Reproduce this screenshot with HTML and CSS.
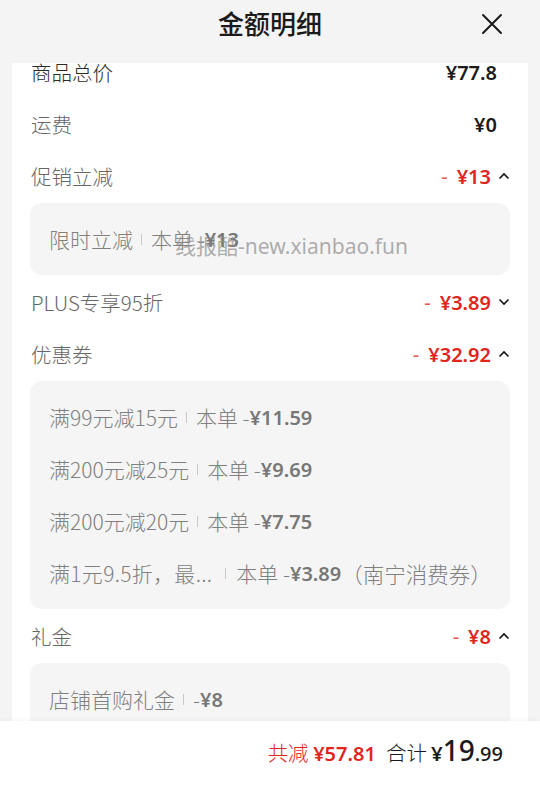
FILE: index.html
```html
<!DOCTYPE html>
<html lang="zh-CN">
<head>
<meta charset="utf-8">
<title>金额明细</title>
<link rel="stylesheet" href="styles.css">
</head>
<body>
<div class="sheet">
  <header class="head">
    <h1 class="title">金额明细</h1>
    <button class="close" aria-label="关闭">
      <svg width="22" height="22" viewBox="0 0 22 22"><path d="M2 2 L20 20 M20 2 L2 20" stroke="#1a1a1a" stroke-width="2" fill="none" stroke-linecap="round"/></svg>
    </button>
  </header>
  <main class="scroll">
    <div class="card">
      <div class="row"><span class="label dark">商品总价</span><span class="val plain">¥77.8</span></div>
      <div class="row"><span class="label">运费</span><span class="val plain">¥0</span></div>
      <div class="row"><span class="label">促销立减</span><span class="val red"><span class="dash">-</span>¥13<svg class="chev" viewBox="0 0 12 8"><path d="M1.5 6.5 L6 2 L10.5 6.5" fill="none" stroke="#111" stroke-width="1.6"/></svg></span></div>
      <div class="box">
        <div class="line">限时立减<i class="sep"></i>本单 -<b>¥13</b></div>
      </div>
      <div class="row"><span class="label">PLUS专享95折</span><span class="val red"><span class="dash">-</span>¥3.89<svg class="chev" viewBox="0 0 12 8"><path d="M1.5 1.5 L6 6 L10.5 1.5" fill="none" stroke="#111" stroke-width="1.6"/></svg></span></div>
      <div class="row"><span class="label">优惠券</span><span class="val red"><span class="dash">-</span>¥32.92<svg class="chev" viewBox="0 0 12 8"><path d="M1.5 6.5 L6 2 L10.5 6.5" fill="none" stroke="#111" stroke-width="1.6"/></svg></span></div>
      <div class="box">
        <div class="line">满99元减15元<i class="sep"></i>本单 -<b>¥11.59</b></div>
        <div class="line">满200元减25元<i class="sep"></i>本单 -<b>¥9.69</b></div>
        <div class="line">满200元减20元<i class="sep"></i>本单 -<b>¥7.75</b></div>
        <div class="line"><span class="trunc">满1元9.5折，最...</span><i class="sep wide"></i>本单 -<b>¥3.89</b><span class="note">（南宁消费券）</span></div>
      </div>
      <div class="row"><span class="label">礼金</span><span class="val red"><span class="dash">-</span>¥8<svg class="chev" viewBox="0 0 12 8"><path d="M1.5 6.5 L6 2 L10.5 6.5" fill="none" stroke="#111" stroke-width="1.6"/></svg></span></div>
      <div class="box">
        <div class="line">店铺首购礼金<i class="sep"></i>-<b>¥8</b></div>
      </div>
    </div>
    <div class="watermark">线报酷-new.xianbao.fun</div>
  </main>
  <footer class="foot">
    <span class="saved">共减 <b>¥57.81</b></span>
    <span class="total">合计 <b class="yen">¥</b><span class="big">19</span><span class="small">.99</span></span>
  </footer>
</div>
</body>
</html>
```

FILE: styles.css
```css
* { box-sizing: border-box; }
html, body { margin: 0; padding: 0; }
body {
  background: #f4f4f4;
  font-family: "Noto Sans CJK SC", "Noto Sans", sans-serif;
  width: 540px;
  height: 786px;
  overflow: hidden;
}
.sheet {
  display: flex;
  flex-direction: column;
  height: 786px;
}
.head {
  position: relative;
  height: 63px;
  flex: none;
  display: flex;
  align-items: center;
  justify-content: center;
  background: #f4f4f4;
}
.title {
  margin: 0;
  font-size: 26px;
  font-weight: 500;
  color: #1a1a1a;
  line-height: 1;
  padding-bottom: 14px;
  position: relative;
  top: -2px;
}
.close {
  position: absolute;
  right: 37px;
  top: 13px;
  width: 22px;
  height: 22px;
  padding: 0;
  border: 0;
  background: none;
  display: flex;
}
.scroll {
  position: relative;
  flex: 1;
  overflow: hidden;
  padding: 0 12px;
}
.card {
  background: #fff;
  margin-top: -17px;
  padding: 0 18px 40px;
  min-height: 800px;
}
.row {
  height: 52px;
  display: flex;
  align-items: center;
  justify-content: space-between;
  padding-left: 1px;
}
.label {
  font-size: 20.5px;
  font-weight: 300;
  color: #666;
}
.label.dark { color: #2a2a2a; }
.val {
  font-size: 20px;
  font-weight: 600;
  display: flex;
  align-items: center;
  font-family: "Noto Sans", "Noto Sans CJK SC", sans-serif;
}
.val.plain {
  color: #1a1a1a;
  margin-right: 13px;
}
.val.red { color: #e1251b; }
.dash {
  font-weight: 400;
  margin-right: 9px;
  color: #e6574e;
}
.chev {
  width: 12px;
  height: 8px;
  margin-left: 7px;
}
.box {
  background: #f5f5f5;
  border-radius: 12px;
  padding: 10px 0;
  margin: 1px 0;
}
.line {
  height: 52px;
  display: flex;
  align-items: center;
  padding-left: 19px;
  font-size: 21px;
  font-weight: 300;
  color: #808080;
  white-space: nowrap;
}
.line b {
  font-weight: 600;
  color: #777;
  font-size: 20px;
  font-family: "Noto Sans", "Noto Sans CJK SC", sans-serif;
}
.trunc { letter-spacing: 0.3px; }
.note { font-size: 21.5px; }
.sep {
  display: inline-block;
  width: 1px;
  height: 11px;
  background: #c8c8c8;
  margin: 0 9px 0 8px;
}
.sep.wide { margin: 0 10px 0 13px; }
.watermark {
  position: absolute;
  left: 175px;
  top: 167px;
  font-size: 21px;
  color: rgba(140, 140, 140, 0.7);
  font-family: "Noto Sans", "Noto Sans CJK SC", sans-serif;
  pointer-events: none;
  white-space: nowrap;
}
.foot {
  height: 65px;
  flex: none;
  background: #fff;
  box-shadow: 0 -2px 4px rgba(0,0,0,0.03);
  position: relative;
  display: flex;
  align-items: center;
  justify-content: flex-end;
  padding: 0 37px 4px 0;
  font-size: 20.5px;
  gap: 10px;
}
.saved { color: #e1251b; font-weight: 300; }
.saved b {
  font-weight: 600;
  font-size: 20px;
  font-family: "Noto Sans", "Noto Sans CJK SC", sans-serif;
}
.total {
  color: #1a1a1a;
  display: flex;
  align-items: baseline;
  font-weight: 300;
}
.total .yen {
  font-weight: 600;
  margin-left: 4px;
  font-family: "Noto Sans", sans-serif;
}
.total .big {
  font-size: 28px;
  font-weight: 500;
  font-family: "Noto Sans", sans-serif;
  line-height: 1;
}
.total .small {
  font-size: 20px;
  font-weight: 500;
  font-family: "Noto Sans", sans-serif;
}
```
